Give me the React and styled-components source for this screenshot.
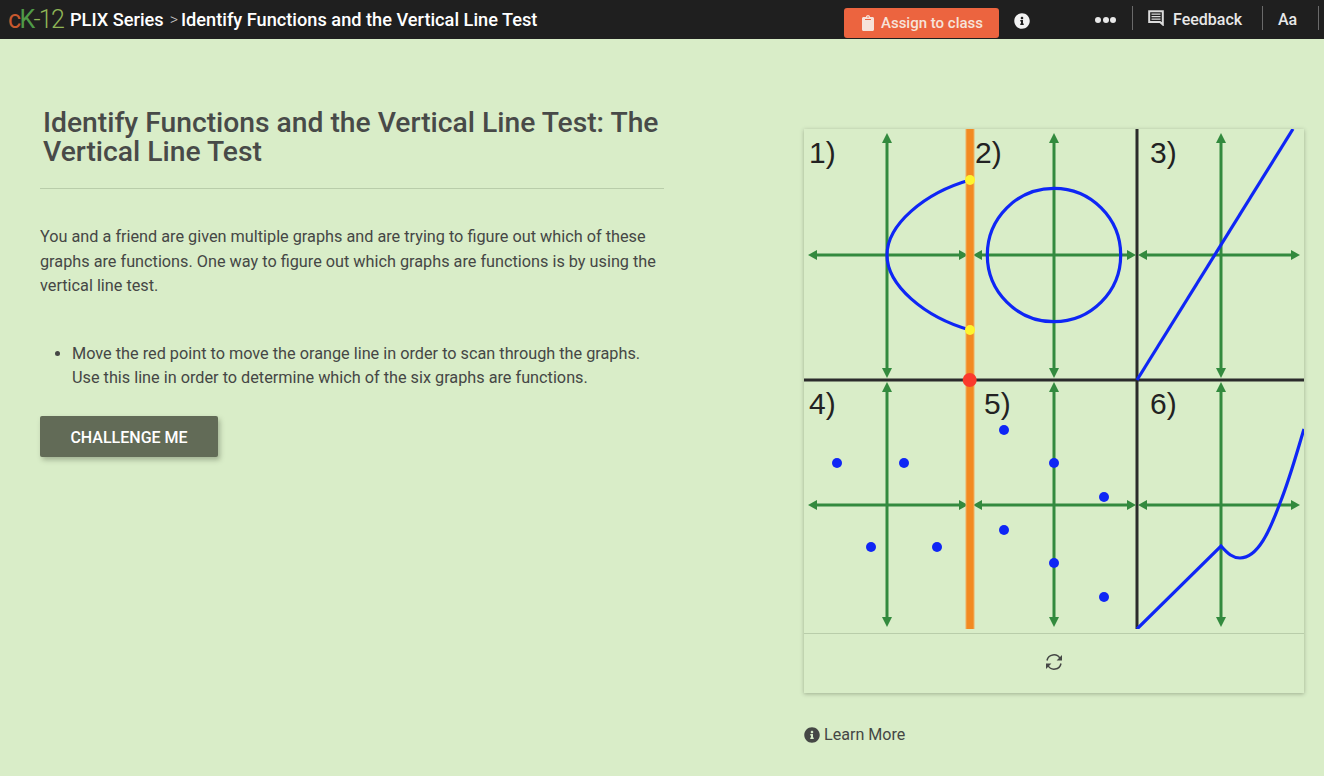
import styled, { createGlobalStyle } from "styled-components";
import { FaClipboard, FaInfoCircle } from "react-icons/fa";

const GlobalStyle = createGlobalStyle`
  html, body {
    margin: 0;
    padding: 0;
    height: 100%;
    background: #d9edc8;
  }
  body {
    font-family: Roboto, "Noto Sans", sans-serif;
    color: #454745;
    overflow: hidden;
  }
`;

const GREEN = "#338a3e";
const BLUE = "#0f26f5";

const dots = [
  [33, 334], [100, 334], [67, 418], [133, 418], [200, 301],
  [250, 334], [300, 368], [200, 401], [250, 434], [300, 468],
];

const labels = [
  ["1)", 5, 34], ["2)", 171, 34], ["3)", 346, 34],
  ["4)", 5, 285], ["5)", 180, 285], ["6)", 346, 285],
];

function HArrow({ from, to, y }) {
  return (
    <g fill={GREEN}>
      <line x1={from + 6} x2={to - 6} y1={y} y2={y} stroke={GREEN} strokeWidth="3" />
      <polygon points={`${from},${y} ${from + 9},${y - 5} ${from + 9},${y + 5}`} />
      <polygon points={`${to},${y} ${to - 9},${y - 5} ${to - 9},${y + 5}`} />
    </g>
  );
}

function VArrow({ x, from, to }) {
  return (
    <g fill={GREEN}>
      <line x1={x} x2={x} y1={from + 6} y2={to - 6} stroke={GREEN} strokeWidth="3" />
      <polygon points={`${x},${from} ${x - 5},${from + 10} ${x + 5},${from + 10}`} />
      <polygon points={`${x},${to} ${x - 5},${to - 10} ${x + 5},${to - 10}`} />
    </g>
  );
}

function Graphs() {
  return (
    <GraphSvg width="500" height="500" viewBox="0 0 500 500">
      <line x1="333" x2="333" y1="0" y2="500" stroke="#2b2b2b" strokeWidth="3" />
      <line x1="0" x2="500" y1="251" y2="251" stroke="#2b2b2b" strokeWidth="3" />

      {[83, 250, 417].map((x) => (
        <g key={x}>
          <VArrow x={x} from={4} to={249} />
          <VArrow x={x} from={253} to={498} />
        </g>
      ))}
      {[126, 376].map((y) => (
        <g key={y}>
          <HArrow from={4} to={164} y={y} />
          <HArrow from={169} to={332} y={y} />
          <HArrow from={334} to={496} y={y} />
        </g>
      ))}

      <g fill="none" stroke={BLUE} strokeWidth="3.2">
        <path d="M166 51 C120 64 83 96 83 126 C83 156 120 188 166 201" />
        <circle cx="250" cy="126" r="66.7" />
        <line x1="333" y1="251" x2="489" y2="0" />
        <path d="M333 500 L417 417 C424 425 429 429 436 429 C454 429 466 401 476 374 C486 349 493 323 500 300" />
      </g>

      {dots.map(([x, y]) => (
        <circle key={`${x}-${y}`} cx={x} cy={y} r="5" fill={BLUE} />
      ))}

      <rect x="161.5" y="0" width="9" height="500" fill="#f0b060" />
      <rect x="162.5" y="0" width="7" height="500" fill="#f28a22" />
      <circle cx="166" cy="51" r="5" fill="#fdf52e" />
      <circle cx="166" cy="201" r="5" fill="#fdf52e" />
      <circle cx="165.7" cy="251" r="7" fill="#fa3a2c" />

      {labels.map(([t, x, y]) => (
        <GraphLabel key={t} x={x} y={y}>{t}</GraphLabel>
      ))}
    </GraphSvg>
  );
}

function FeedbackIcon() {
  return (
    <svg width="16" height="16" viewBox="0 0 16 16">
      <path d="M1.2 1.2H14.8V14.5L12 12H1.2Z" fill="none" stroke="#dcdcdc" strokeWidth="2" />
      <path d="M3.5 4.2H12.5M3.5 6.7H12.5M3.5 9.2H12.5" stroke="#dcdcdc" strokeWidth="1.3" />
    </svg>
  );
}

export default function App() {
  return (
    <>
      <GlobalStyle />
      <TopBar>
        <Crumbs>
          <Logo><span>c</span><b>K</b><i>-12</i></Logo>
          <Crumb>PLIX Series</Crumb>
          <Chevron>&gt;</Chevron>
          <Crumb>Identify Functions and the Vertical Line Test</Crumb>
        </Crumbs>
        <Tools>
          <AssignButton><FaClipboard size={16} />Assign to class</AssignButton>
          <InfoIcon><FaInfoCircle size={16} /></InfoIcon>
          <More><Dot /><Dot /><Dot /></More>
          <Divider />
          <Feedback><FeedbackIcon />Feedback</Feedback>
          <Divider />
          <FontSwitch>Aa</FontSwitch>
          <Divider />
        </Tools>
      </TopBar>

      <Main>
        <Intro>
          <Title>Identify Functions and the Vertical Line Test: The Vertical Line Test</Title>
          <Rule />
          <Para>
            You and a friend are given multiple graphs and are trying to figure out which of these
            graphs are functions. One way to figure out which graphs are functions is by using the
            vertical line test.
          </Para>
          <Steps>
            <li>
              Move the red point to move the orange line in order to scan through the graphs.
              Use this line in order to determine which of the six graphs are functions.
            </li>
          </Steps>
          <ChallengeButton>CHALLENGE ME</ChallengeButton>
        </Intro>

        <Side>
          <Panel>
            <Graphs />
            <PanelFooter>
              <svg width="20" height="20" viewBox="0 0 20 20">
                <g fill="none" stroke="#454745" strokeWidth="1.5">
                  <path d="M3 8.5 A7 7 0 0 1 16 6.5" />
                  <path d="M17 11.5 A7 7 0 0 1 4 13.5" />
                </g>
                <polygon points="18,3 18,8.5 12.6,8.5" fill="#454745" />
                <polygon points="2,17 2,11.5 7.4,11.5" fill="#454745" />
              </svg>
            </PanelFooter>
          </Panel>
          <LearnMore><FaInfoCircle size={16} />Learn More</LearnMore>
        </Side>
      </Main>
    </>
  );
}

const TopBar = styled.header`
  height: 39px;
  background: #1f1f1f;
  display: flex;
  align-items: center;
  justify-content: space-between;
  color: #fff;
`;

const Crumbs = styled.div`
  display: flex;
  align-items: center;
  padding-left: 8px;
`;

const Logo = styled.div`
  font-family: Roboto, sans-serif;
  font-weight: 300;
  font-size: 25px;
  line-height: 39px;
  letter-spacing: -1.7px;
  width: 62px;
  white-space: nowrap;
  span { color: #c8592e; font-weight: 400; }
  b { color: #4f9a47; font-weight: 400; }
  i { color: #8fb556; font-style: normal; }
`;

const Crumb = styled.span`
  font-size: 18.2px;
  font-weight: 500;
  color: #fff;
`;

const Chevron = styled.span`
  font-size: 16px;
  font-weight: 300;
  color: #c9c9c9;
  margin: 0 3px 0 6px;
`;

const Tools = styled.div`
  display: flex;
  align-items: center;
  height: 39px;
  padding-right: 5px;
`;

const AssignButton = styled.button`
  width: 155px;
  height: 30px;
  margin-top: 7px;
  border: 0;
  border-radius: 3px;
  background: #ec643f;
  color: #f6e3da;
  font-family: inherit;
  font-size: 15px;
  font-weight: 500;
  display: flex;
  align-items: center;
  justify-content: center;
  gap: 5px;
  padding: 0;
`;

const InfoIcon = styled.span`
  display: flex;
  margin: 3px 0 0 15px;
  color: #f2f2f2;
`;

const More = styled.span`
  margin-left: 65px;
  width: 37px;
  display: flex;
  gap: 1.5px;
`;

const Dot = styled.span`
  width: 6px;
  height: 6px;
  border-radius: 50%;
  background: #e8e8e8;
`;

const Divider = styled.span`
  width: 1px;
  height: 24px;
  background: #6a6a6a;
  margin-bottom: 3px;
`;

const Feedback = styled.span`
  display: flex;
  align-items: center;
  gap: 9px;
  width: 114px;
  padding-left: 15px;
  font-size: 16px;
  font-weight: 500;
  color: #e8e8e8;
  svg { margin-bottom: 3px; }
`;

const FontSwitch = styled.span`
  width: 55px;
  padding-left: 15px;
  box-sizing: border-box;
  font-size: 16px;
  font-weight: 500;
  color: #e8e8e8;
`;

const Main = styled.main`
  display: flex;
  padding-left: 40px;
`;

const Intro = styled.section`
  width: 624px;
  padding-top: 69px;
`;

const Title = styled.h1`
  margin: 0;
  padding: 0 3px;
  font-size: 28.25px;
  line-height: 29px;
  font-weight: 500;
  color: #484a48;
`;

const Rule = styled.hr`
  border: 0;
  height: 1px;
  background: #b9cdaa;
  margin: 22px 0 36px;
`;

const Para = styled.p`
  margin: 0;
  font-size: 16.25px;
  line-height: 24.5px;
  color: #454745;
`;

const Steps = styled.ul`
  margin: 43px 0 0;
  padding-left: 32px;
  font-size: 16.25px;
  line-height: 24.5px;
`;

const ChallengeButton = styled.button`
  display: block;
  width: 178px;
  height: 41px;
  margin-top: 25px;
  padding: 2px 0 0;
  border: 0;
  border-radius: 2px;
  background: #626b57;
  color: #fff;
  font-family: inherit;
  font-size: 16px;
  font-weight: 500;
  box-shadow: 2px 3px 5px rgba(60, 70, 50, 0.35);
`;

const Side = styled.aside`
  margin-left: 140px;
  padding-top: 90px;
  width: 500px;
`;

const Panel = styled.div`
  background: #d9edc8;
  box-shadow: 0 1px 4px rgba(70, 80, 60, 0.4);
`;

const GraphSvg = styled.svg`
  display: block;
`;

const GraphLabel = styled.text`
  font-family: "Liberation Sans", Arial, sans-serif;
  font-size: 30px;
  fill: #222;
`;

const PanelFooter = styled.div`
  margin-top: 4px;
  height: 55px;
  padding-bottom: 4px;
  border-top: 1px solid #b9cdaa;
  display: flex;
  align-items: center;
  justify-content: center;
`;

const LearnMore = styled.div`
  margin-top: 32px;
  display: flex;
  align-items: center;
  gap: 4px;
  font-size: 16.1px;
  color: #454745;
`;
